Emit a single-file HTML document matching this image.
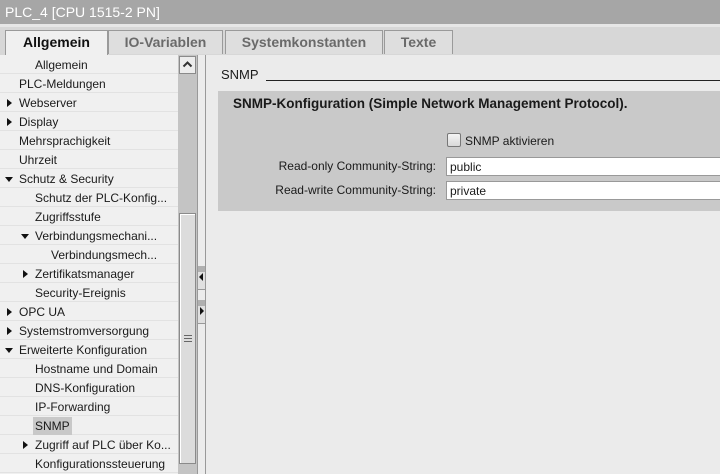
<!DOCTYPE html>
<html><head><meta charset="utf-8"><style>
*{margin:0;padding:0;box-sizing:border-box}
body{width:720px;height:474px;overflow:hidden;background:#ececec;font-family:"Liberation Sans",sans-serif;font-size:12px;color:#1a1a1a;position:relative}
.abs{position:absolute}
.title{left:0;top:0;width:720px;height:24px;background:#a6a6a6;color:#fff;font-size:14px;padding:4px 0 0 5px}
.strip{left:0;top:24px;width:720px;height:31px;background:#d7d7d7;border-top:3px solid #e6e6e6}
.tab{top:30px;height:24px;background:#dedede;border:1px solid #9a9a9a;border-bottom:none;font-size:14px;font-weight:bold;color:#6a6a6a;text-align:center;padding-top:3px}
.tab.act{background:#f0f0f0;color:#111;height:25px}
.list{left:0;top:55px;width:178px;height:419px;background:#f0f0f0}
.row{position:absolute;left:0;width:178px;height:19px;border-bottom:1px solid #e2e2e2;line-height:20px;white-space:nowrap}
.tri{position:absolute;top:6px;width:0;height:0}
.tr{border-left:5px solid #111;border-top:4px solid transparent;border-bottom:4px solid transparent}
.td{border-top:5px solid #111;border-left:4px solid transparent;border-right:4px solid transparent;top:8px}
.content{left:206px;top:55px;width:514px;height:419px;background:#ebebeb}
</style></head><body>
<div class="abs title">PLC_4 [CPU 1515-2 PN]</div>
<div class="abs strip"></div>
<div class="abs tab act" style="left:5px;width:103px">Allgemein</div>
<div class="abs tab" style="left:108px;width:115px">IO-Variablen</div>
<div class="abs tab" style="left:225px;width:158px">Systemkonstanten</div>
<div class="abs tab" style="left:384px;width:69px">Texte</div>

<div class="abs list">
<div class="row" style="top:0;padding-left:35px">Allgemein</div>
<div class="row" style="top:19px;padding-left:19px">PLC-Meldungen</div>
<div class="row" style="top:38px;padding-left:19px"><span class="tri tr" style="left:7px"></span>Webserver</div>
<div class="row" style="top:57px;padding-left:19px"><span class="tri tr" style="left:7px"></span>Display</div>
<div class="row" style="top:76px;padding-left:19px">Mehrsprachigkeit</div>
<div class="row" style="top:95px;padding-left:19px">Uhrzeit</div>
<div class="row" style="top:114px;padding-left:19px"><span class="tri td" style="left:5px"></span>Schutz &amp; Security</div>
<div class="row" style="top:133px;padding-left:35px">Schutz der PLC-Konfig...</div>
<div class="row" style="top:152px;padding-left:35px">Zugriffsstufe</div>
<div class="row" style="top:171px;padding-left:35px"><span class="tri td" style="left:21px"></span>Verbindungsmechani...</div>
<div class="row" style="top:190px;padding-left:51px">Verbindungsmech...</div>
<div class="row" style="top:209px;padding-left:35px"><span class="tri tr" style="left:23px"></span>Zertifikatsmanager</div>
<div class="row" style="top:228px;padding-left:35px">Security-Ereignis</div>
<div class="row" style="top:247px;padding-left:19px"><span class="tri tr" style="left:7px"></span>OPC UA</div>
<div class="row" style="top:266px;padding-left:19px"><span class="tri tr" style="left:7px"></span>Systemstromversorgung</div>
<div class="row" style="top:285px;padding-left:19px"><span class="tri td" style="left:5px"></span>Erweiterte Konfiguration</div>
<div class="row" style="top:304px;padding-left:35px">Hostname und Domain</div>
<div class="row" style="top:323px;padding-left:35px">DNS-Konfiguration</div>
<div class="row" style="top:342px;padding-left:35px">IP-Forwarding</div>
<div class="row" style="top:361px;padding-left:33px"><span style="background:#c8c8c8;padding:2px 2px">SNMP</span></div>
<div class="row" style="top:380px;padding-left:35px"><span class="tri tr" style="left:23px"></span>Zugriff auf PLC über Ko...</div>
<div class="row" style="top:399px;padding-left:35px">Konfigurationssteuerung</div>
</div>

<div class="abs" style="left:178px;top:55px;width:19px;height:419px;background:#c4c4c4"></div>
<div class="abs" style="left:179px;top:56px;width:17px;height:18px;background:#ececec;border:1px solid #8a8a8a"></div>
<svg class="abs" style="left:182px;top:60px" width="11" height="8"><path d="M1.5 6.5 L5.5 2.5 L9.5 6.5" stroke="#333" stroke-width="2" fill="none"/></svg>
<div class="abs" style="left:179px;top:213px;width:17px;height:251px;background:#dcdcdc;border:1px solid #8a8a8a;box-shadow:inset 1px 1px 0 #fff"></div>
<div class="abs" style="left:184px;top:335px;width:8px;height:7px;border-top:1px solid #666;border-bottom:1px solid #666"></div>
<div class="abs" style="left:184px;top:338px;width:8px;height:1px;background:#666"></div>
<div class="abs" style="left:197px;top:55px;width:9px;height:419px;background:#ececec;border-left:1px solid #999;border-right:1px solid #999"></div>
<div class="abs" style="left:198px;top:266px;width:7px;height:24px;background:#e0e0e0;border-top:6px solid #b0b0b0;border-bottom:1px solid #999"></div>
<div class="abs" style="left:198px;top:300px;width:7px;height:24px;background:#e0e0e0;border-top:6px solid #b0b0b0;border-bottom:1px solid #999"></div>
<svg class="abs" style="left:199px;top:273px" width="5" height="8"><path d="M4 0 L0 4 L4 8Z" fill="#111"/></svg>
<svg class="abs" style="left:200px;top:307px" width="5" height="8"><path d="M0 0 L4 4 L0 8Z" fill="#111"/></svg>

<div class="abs content"></div>
<div class="abs" style="left:221px;top:67px;font-size:13px">SNMP</div>
<div class="abs" style="left:266px;top:80px;width:454px;height:1px;background:#222"></div>
<div class="abs" style="left:218px;top:91px;width:502px;height:120px;background:#c9c9c9"></div>
<div class="abs" style="left:233px;top:96px;font-size:13.5px;font-weight:bold">SNMP-Konfiguration (Simple Network Management Protocol).</div>
<div class="abs" style="left:447px;top:133px;width:14px;height:14px;border:1px solid #777;border-radius:2px;background:linear-gradient(#f4f4f4,#d8d8d8)"></div>
<div class="abs" style="left:465px;top:134px">SNMP aktivieren</div>
<div class="abs" style="left:200px;width:236px;top:159px;text-align:right">Read-only Community-String:</div>
<div class="abs" style="left:200px;width:236px;top:183px;text-align:right">Read-write Community-String:</div>
<div class="abs" style="left:446px;top:157px;width:274px;height:19px;background:#fff;border:1px solid #999;border-right:none;padding:2px 0 0 3px">public</div>
<div class="abs" style="left:446px;top:181px;width:274px;height:19px;background:#fff;border:1px solid #999;border-right:none;padding:2px 0 0 3px">private</div>
</body></html>
